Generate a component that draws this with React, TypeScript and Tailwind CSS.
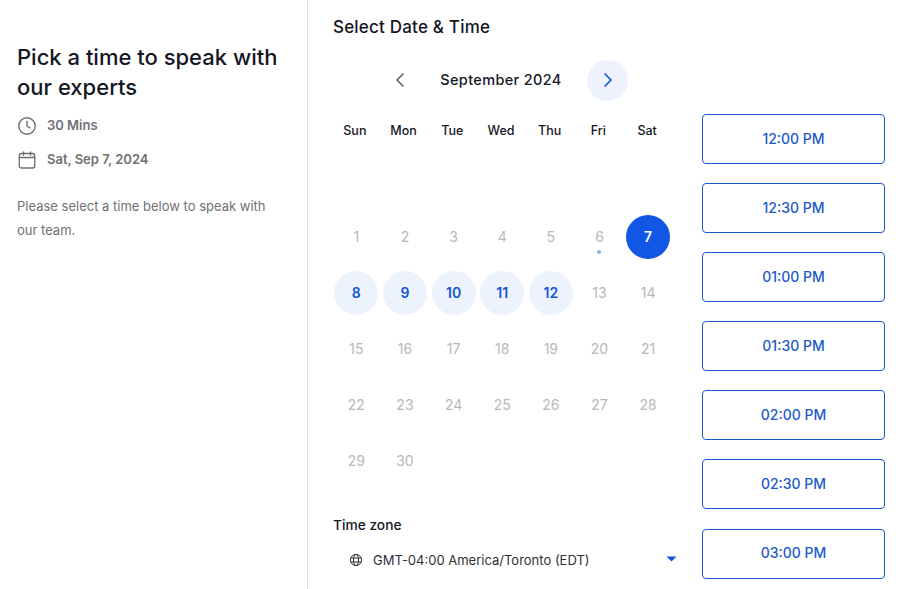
import React from "react";

const headers = ["Sun", "Mon", "Tue", "Wed", "Thu", "Fri", "Sat"];
const times = ["12:00 PM", "12:30 PM", "01:00 PM", "01:30 PM", "02:00 PM", "02:30 PM", "03:00 PM"];

function Day({ n }: { n: number }) {
  if (n === 7) {
    return (
      <div className="w-[44px] h-[44px] rounded-full bg-[#1256e6] text-white font-semibold leading-[20px] pb-[1px] flex items-center justify-center">
        {n}
      </div>
    );
  }
  if (n >= 8 && n <= 12) {
    return (
      <div className="w-[44px] h-[44px] rounded-full bg-[#edf3fc] text-[#1256d6] font-semibold leading-[20px] pb-[1px] flex items-center justify-center">
        {n}
      </div>
    );
  }
  return (
    <div className="relative w-[44px] h-[44px] text-[#b8b8b8] leading-[20px] pb-[1px] flex items-center justify-center">
      {n}
      {n === 6 && <span className="absolute left-[19px] top-[35px] w-[4px] h-[4px] rounded-full bg-[#8aaee8]" />}
    </div>
  );
}

export default function App() {
  const cells: (number | null)[] = [null, null, null, null, null, null, null];
  for (let i = 1; i <= 30; i++) cells.push(i);
  return (
    <div className="w-[906px] h-[589px] overflow-hidden bg-white flex font-['Inter',sans-serif] text-[#14171f]">
      <aside className="w-[308px] shrink-0 border-r border-[#e4e4e6] pl-[17px] pr-[24px] pt-[42px]">
        <h1 className="text-[22px] leading-[30px] font-medium whitespace-nowrap">
          Pick a time to speak with
          <br />
          our experts
        </h1>
        <div className="mt-[7px] flex items-center h-[34px] text-[13px] font-semibold text-[#6f7176]">
          <svg width="20" height="20" viewBox="0 0 20 20" fill="none" stroke="#6b6d72" strokeWidth="1.4" strokeLinecap="round" strokeLinejoin="round" className="shrink-0">
            <circle cx="10" cy="10" r="8.2" />
            <path d="M10 5.2V10l3 1.8" />
          </svg>
          <span className="ml-[10px]">30 Mins</span>
        </div>
        <div className="flex items-center h-[34px] text-[13px] font-semibold text-[#6f7176]">
          <svg width="20" height="20" viewBox="0 0 20 20" fill="none" stroke="#6b6d72" strokeWidth="1.3" strokeLinecap="round" strokeLinejoin="round" className="shrink-0">
            <rect x="2.3" y="3.5" width="15.4" height="14.5" rx="2" />
            <path d="M2.3 7.5h15.4M6.5 1.8v3.4M13.5 1.8v3.4" />
          </svg>
          <span className="ml-[10px]">Sat, Sep 7, 2024</span>
        </div>
        <p className="mt-[17px] text-[13px] leading-[24px] text-[#6f7176] whitespace-nowrap">
          Please select a time below to speak with
          <br />
          our team.
        </p>
      </aside>
      <main className="flex-1 min-w-0 pl-[25px] pr-[21px]">
        <h2 className="h-[54px] pt-[16px] text-[17px] leading-[22px] font-medium tracking-[0.2px]">Select Date &amp; Time</h2>
        <div className="flex">
          <div className="w-[369px] shrink-0 flex flex-col">
            <div className="mt-[4px] w-[341px] h-[44px] flex items-center">
              <div className="w-[41px] h-[41px] ml-[46px] flex items-center justify-center">
                <svg width="12" height="16" viewBox="0 0 12 16" fill="none" stroke="#5f6166" strokeWidth="1.6" strokeLinecap="round" strokeLinejoin="round">
                  <path d="M9 2L3 8l6 6" />
                </svg>
              </div>
              <div className="w-[167px] pr-[5px] text-center text-[14.5px] font-medium tracking-[0.35px] whitespace-nowrap">September 2024</div>
              <div className="w-[41px] h-[41px] rounded-full bg-[#edf3fc] flex items-center justify-center">
                <svg width="12" height="16" viewBox="0 0 12 16" fill="none" stroke="#1256d6" strokeWidth="1.7" strokeLinecap="round" strokeLinejoin="round">
                  <path d="M3 2l6 6-6 6" />
                </svg>
              </div>
            </div>
            <div className="mt-[19px] -ml-[1px] w-[341px] grid grid-cols-7 text-[12.5px] font-medium leading-[20px]">
              {headers.map((h) => (
                <div key={h} className="text-center pr-[3px]">{h}</div>
              ))}
            </div>
            <div className="mt-[12px] -ml-[1px] w-[340.5px] grid grid-cols-7 auto-rows-[56px] text-[14px]">
              {cells.map((c, i) => (
                <div key={i} className="flex items-center justify-center">
                  {c !== null && <Day n={c} />}
                </div>
              ))}
            </div>
            <div className="mt-[26px] text-[13.75px] leading-[20px] font-medium">Time zone</div>
            <div className="mt-[15px] w-[345px] flex items-center text-[13px] leading-[20px] text-[#2e3036]">
              <svg width="14" height="14" viewBox="0 0 14 14" fill="none" stroke="#2e3036" strokeWidth="1" className="ml-[16px] shrink-0">
                <circle cx="7" cy="7" r="5.6" />
                <ellipse cx="7" cy="7" rx="2.5" ry="5.6" />
                <path d="M1.6 5h10.8M1.6 9h10.8" />
              </svg>
              <span className="ml-[10px] whitespace-nowrap">GMT-04:00 America/Toronto (EDT)</span>
              <svg width="11" height="6" viewBox="0 0 11 6" className="ml-auto shrink-0 -translate-y-[1px] -translate-x-[1px]">
                <path d="M0.5 0.5h10L5.5 5.5z" fill="#1256d6" />
              </svg>
            </div>
          </div>
          <div className="w-[183px] shrink-0 mt-[60px] flex flex-col gap-[19.1px]">
            {times.map((t) => (
              <div key={t} className="h-[50px] shrink-0 rounded-[4px] border border-[#1a5ac8] text-[#1a5ac8] text-[14px] leading-[20px] pb-[1px] font-medium flex items-center justify-center">
                {t}
              </div>
            ))}
          </div>
        </div>
      </main>
    </div>
  );
}
